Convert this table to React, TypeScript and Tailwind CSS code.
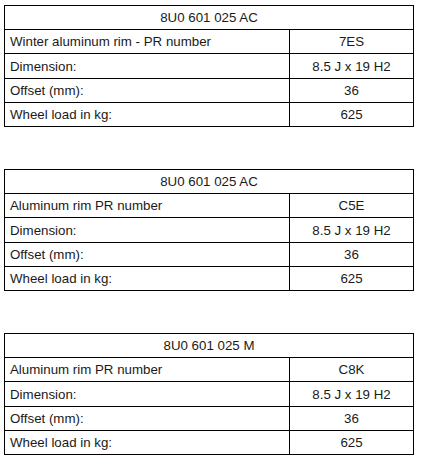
const tables = [
  {
    part: "8U0 601 025 AC",
    rows: [
      ["Winter aluminum rim - PR number", "7ES"],
      ["Dimension:", "8.5 J x 19 H2"],
      ["Offset (mm):", "36"],
      ["Wheel load in kg:", "625"],
    ],
  },
  {
    part: "8U0 601 025 AC",
    rows: [
      ["Aluminum rim PR number", "C5E"],
      ["Dimension:", "8.5 J x 19 H2"],
      ["Offset (mm):", "36"],
      ["Wheel load in kg:", "625"],
    ],
  },
  {
    part: "8U0 601 025 M",
    rows: [
      ["Aluminum rim PR number", "C8K"],
      ["Dimension:", "8.5 J x 19 H2"],
      ["Offset (mm):", "36"],
      ["Wheel load in kg:", "625"],
    ],
  },
];

export default function App() {
  return (
    <div className="min-h-[468px] bg-white pl-[4px] pt-[5px] text-[13.3px] text-[#1a1a1a] [font-family:'Liberation_Sans',Arial,sans-serif]">
      <div className="flex w-[410px] flex-col gap-[42px]">
        {tables.map((t, i) => (
          <table key={i} className="w-full border-collapse">
            <tbody>
              <tr className="h-[24px]">
                <td colSpan={2} className="border border-black p-0 text-center leading-[23px]">
                  {t.part}
                </td>
              </tr>
              {t.rows.map(([label, value], j) => (
                <tr key={j} className={j === 1 ? "h-[25px]" : "h-[24px]"}>
                  <td className="w-[285px] border border-black px-[5px] py-0 leading-[23px]">{label}</td>
                  <td className="border border-black p-0 text-center leading-[23px]">{value}</td>
                </tr>
              ))}
            </tbody>
          </table>
        ))}
      </div>
    </div>
  );
}
